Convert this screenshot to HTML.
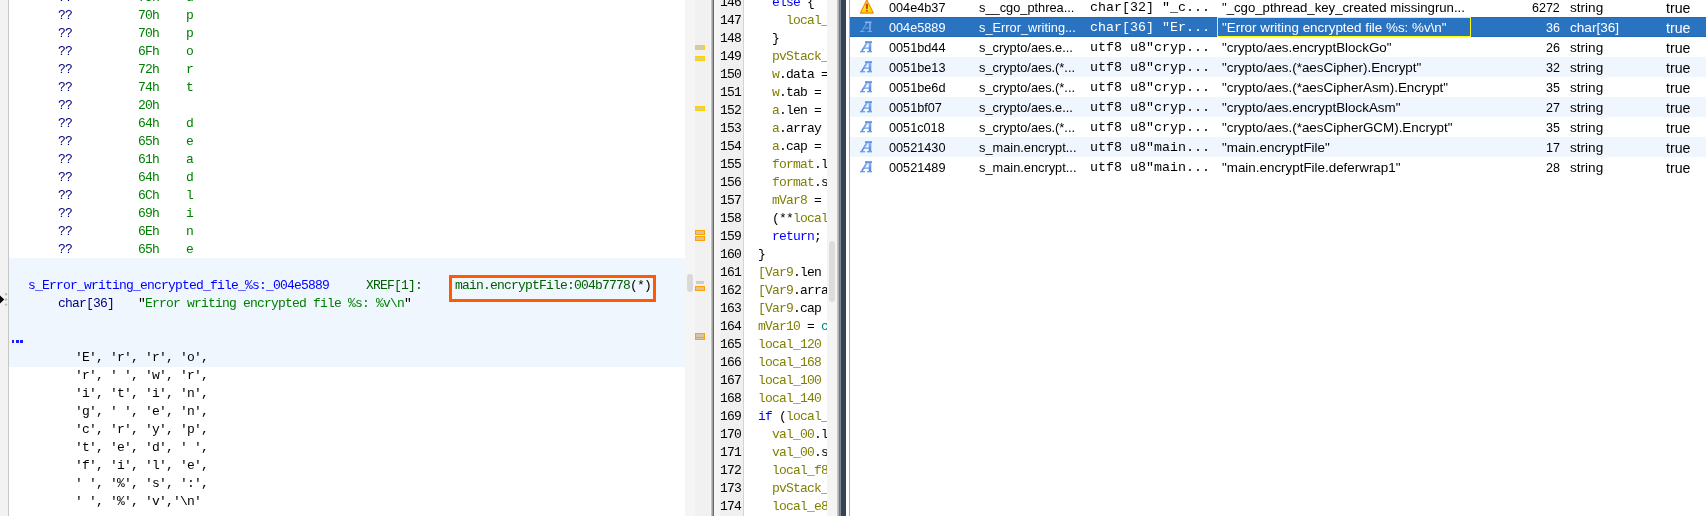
<!DOCTYPE html><html><head><meta charset='utf-8'><style>
html,body{margin:0;padding:0;width:1706px;height:516px;overflow:hidden;background:#fff}
body>div,body>svg{position:absolute}
div{position:absolute;box-sizing:content-box}
.m,.t,.tm{will-change:transform}
.m{font-family:'Liberation Mono', monospace;font-size:13.0px;letter-spacing:-0.8px;line-height:18px;white-space:pre}
.t{font-family:'Liberation Sans', sans-serif;font-size:13.5px;line-height:20px;white-space:pre}
.tm{font-family:'Liberation Mono', monospace;font-size:13.34px;letter-spacing:0px;line-height:20px;white-space:pre}
</style></head><body><div style="left:0;top:0;width:8px;height:516px;background:#f2f2f2"></div><div style="left:8px;top:0;width:1px;height:516px;background:#c6c6c6"></div><div style="left:9px;top:0;width:676px;height:516px;background:#ffffff"></div><div style="left:9px;top:258px;width:676px;height:109px;background:#eff6fe"></div><div class="m" style="left:58px;top:-11px"><span style="color:#00007f">??</span></div><div class="m" style="left:138px;top:-11px"><span style="color:#008000">75h</span></div><div class="m" style="left:186px;top:-11px"><span style="color:#008000">u</span></div><div class="m" style="left:58px;top:7px"><span style="color:#00007f">??</span></div><div class="m" style="left:138px;top:7px"><span style="color:#008000">70h</span></div><div class="m" style="left:186px;top:7px"><span style="color:#008000">p</span></div><div class="m" style="left:58px;top:25px"><span style="color:#00007f">??</span></div><div class="m" style="left:138px;top:25px"><span style="color:#008000">70h</span></div><div class="m" style="left:186px;top:25px"><span style="color:#008000">p</span></div><div class="m" style="left:58px;top:43px"><span style="color:#00007f">??</span></div><div class="m" style="left:138px;top:43px"><span style="color:#008000">6Fh</span></div><div class="m" style="left:186px;top:43px"><span style="color:#008000">o</span></div><div class="m" style="left:58px;top:61px"><span style="color:#00007f">??</span></div><div class="m" style="left:138px;top:61px"><span style="color:#008000">72h</span></div><div class="m" style="left:186px;top:61px"><span style="color:#008000">r</span></div><div class="m" style="left:58px;top:79px"><span style="color:#00007f">??</span></div><div class="m" style="left:138px;top:79px"><span style="color:#008000">74h</span></div><div class="m" style="left:186px;top:79px"><span style="color:#008000">t</span></div><div class="m" style="left:58px;top:97px"><span style="color:#00007f">??</span></div><div class="m" style="left:138px;top:97px"><span style="color:#008000">20h</span></div><div class="m" style="left:186px;top:97px"><span style="color:#008000"> </span></div><div class="m" style="left:58px;top:115px"><span style="color:#00007f">??</span></div><div class="m" style="left:138px;top:115px"><span style="color:#008000">64h</span></div><div class="m" style="left:186px;top:115px"><span style="color:#008000">d</span></div><div class="m" style="left:58px;top:133px"><span style="color:#00007f">??</span></div><div class="m" style="left:138px;top:133px"><span style="color:#008000">65h</span></div><div class="m" style="left:186px;top:133px"><span style="color:#008000">e</span></div><div class="m" style="left:58px;top:151px"><span style="color:#00007f">??</span></div><div class="m" style="left:138px;top:151px"><span style="color:#008000">61h</span></div><div class="m" style="left:186px;top:151px"><span style="color:#008000">a</span></div><div class="m" style="left:58px;top:169px"><span style="color:#00007f">??</span></div><div class="m" style="left:138px;top:169px"><span style="color:#008000">64h</span></div><div class="m" style="left:186px;top:169px"><span style="color:#008000">d</span></div><div class="m" style="left:58px;top:187px"><span style="color:#00007f">??</span></div><div class="m" style="left:138px;top:187px"><span style="color:#008000">6Ch</span></div><div class="m" style="left:186px;top:187px"><span style="color:#008000">l</span></div><div class="m" style="left:58px;top:205px"><span style="color:#00007f">??</span></div><div class="m" style="left:138px;top:205px"><span style="color:#008000">69h</span></div><div class="m" style="left:186px;top:205px"><span style="color:#008000">i</span></div><div class="m" style="left:58px;top:223px"><span style="color:#00007f">??</span></div><div class="m" style="left:138px;top:223px"><span style="color:#008000">6Eh</span></div><div class="m" style="left:186px;top:223px"><span style="color:#008000">n</span></div><div class="m" style="left:58px;top:241px"><span style="color:#00007f">??</span></div><div class="m" style="left:138px;top:241px"><span style="color:#008000">65h</span></div><div class="m" style="left:186px;top:241px"><span style="color:#008000">e</span></div><div class="m" style="left:28px;top:277px"><span style="color:#0000ff">s_Error_writing_encrypted_file_%s:_004e5889</span></div><div class="m" style="left:366px;top:277px"><span style="color:#005f00">XREF[1]:</span></div><div class="m" style="left:455px;top:277px"><span style="color:#005f00">main.encryptFile:004b7778</span><span style="color:#000000">(*)</span></div><div style="left:449px;top:275px;width:201px;height:21px;border:3px solid #ff5a00"></div><div class="m" style="left:58px;top:295px"><span style="color:#00007f">char[36]</span></div><div class="m" style="left:138px;top:295px"><span style="color:#000000">"</span><span style="color:#008000">Error writing encrypted file %s: %v\n</span><span style="color:#000000">"</span></div><div style="left:11.6px;top:340.4px;width:2.6px;height:2.8px;background:#1a1aff"></div><div style="left:16px;top:340.4px;width:2.6px;height:2.8px;background:#1a1aff"></div><div style="left:20.4px;top:340.4px;width:2.6px;height:2.8px;background:#1a1aff"></div><div class="m" style="left:75px;top:349px"><span style="color:#000000">'E', 'r', 'r', 'o',</span></div><div class="m" style="left:75px;top:367px"><span style="color:#000000">'r', ' ', 'w', 'r',</span></div><div class="m" style="left:75px;top:385px"><span style="color:#000000">'i', 't', 'i', 'n',</span></div><div class="m" style="left:75px;top:403px"><span style="color:#000000">'g', ' ', 'e', 'n',</span></div><div class="m" style="left:75px;top:421px"><span style="color:#000000">'c', 'r', 'y', 'p',</span></div><div class="m" style="left:75px;top:439px"><span style="color:#000000">'t', 'e', 'd', ' ',</span></div><div class="m" style="left:75px;top:457px"><span style="color:#000000">'f', 'i', 'l', 'e',</span></div><div class="m" style="left:75px;top:475px"><span style="color:#000000">' ', '%', 's', ':',</span></div><div class="m" style="left:75px;top:493px"><span style="color:#000000">' ', '%', 'v','\n'</span></div><svg style="position:absolute;left:0;top:293px" width="9" height="14"><path d="M0 2.5 L4.2 6.5 L0 10.5 Z" fill="#000"/><circle cx="6" cy="1.3" r="1.2" fill="#bdbdbd"/><circle cx="6" cy="6.5" r="1.2" fill="#bdbdbd"/><circle cx="6" cy="11.6" r="1.2" fill="#bdbdbd"/></svg><div style="left:685px;top:0;width:10px;height:516px;background:#f5f5f5"></div><div style="left:687px;top:274px;width:6px;height:18px;background:#d9d9d9;border-radius:3px"></div><div style="left:695px;top:0;width:16px;height:516px;background:#f1f1f1"></div><div style="left:695px;top:45px;width:8px;height:3px;border:1px solid #ffd200;background:#d6cca0"></div><div style="left:695px;top:56px;width:8px;height:3px;border:1px solid #ffd200;background:#d6cca0"></div><div style="left:695px;top:106px;width:8px;height:3px;border:1px solid #ffd200;background:#d6cca0"></div><div style="left:695px;top:230px;width:8px;height:3px;border:1px solid #ffa200;background:#d6c4a2"></div><div style="left:695px;top:236px;width:8px;height:3px;border:1px solid #ffa200;background:#d6c4a2"></div><div style="left:696px;top:281px;width:8px;height:3px;background:#cdcdcd"></div><div style="left:695px;top:286px;width:8px;height:3px;border:1px solid #ffa200;background:#d6c4a2"></div><div style="left:695px;top:333px;width:8px;height:5px;border:1px solid #ffa200;background:#d6c4a2"></div><div style="left:696px;top:337px;width:8px;height:1px;background:#ffa200"></div><div style="left:710px;top:0;width:1px;height:516px;background:#f6f6f6"></div><div style="left:711px;top:0;width:1px;height:516px;background:#c0c0c0"></div><div style="left:712px;top:0;width:1px;height:516px;background:#a0a0a0"></div><div style="left:713px;top:0;width:1px;height:516px;background:#6a6a6a"></div><div style="left:714px;top:0;width:6px;height:516px;background:#f6f6f6"></div><div style="left:720px;top:0;width:23px;height:516px;background:#f0f0f0"></div><div style="left:743px;top:0;width:1px;height:516px;background:#d4d4d4"></div><div style="left:744px;top:0;width:83px;height:516px;background:#ffffff"></div><div style="left:744px;top:0;width:83px;height:516px;overflow:hidden"><div class="m" style="left:0px;top:-6px"><span style="color:#0000ff">    else</span><span style="color:#000000"> {</span></div><div class="m" style="left:0px;top:12px"><span style="color:#7f7f00">      local_</span></div><div class="m" style="left:0px;top:30px"><span style="color:#000000">    }</span></div><div class="m" style="left:0px;top:48px"><span style="color:#7f7f00">    pvStack_</span></div><div class="m" style="left:0px;top:66px"><span style="color:#7f7f00">    w</span><span style="color:#000000">.data =</span></div><div class="m" style="left:0px;top:84px"><span style="color:#7f7f00">    w</span><span style="color:#000000">.tab =</span></div><div class="m" style="left:0px;top:102px"><span style="color:#7f7f00">    a</span><span style="color:#000000">.len =</span></div><div class="m" style="left:0px;top:120px"><span style="color:#7f7f00">    a</span><span style="color:#000000">.array</span></div><div class="m" style="left:0px;top:138px"><span style="color:#7f7f00">    a</span><span style="color:#000000">.cap =</span></div><div class="m" style="left:0px;top:156px"><span style="color:#7f7f00">    format</span><span style="color:#000000">.l</span></div><div class="m" style="left:0px;top:174px"><span style="color:#7f7f00">    format</span><span style="color:#000000">.s</span></div><div class="m" style="left:0px;top:192px"><span style="color:#7f7f00">    mVar8</span><span style="color:#000000"> =</span></div><div class="m" style="left:0px;top:210px"><span style="color:#000000">    (**</span><span style="color:#7f7f00">local</span></div><div class="m" style="left:0px;top:228px"><span style="color:#0000ff">    return</span><span style="color:#000000">;</span></div><div class="m" style="left:0px;top:246px"><span style="color:#000000">  }</span></div><div class="m" style="left:0px;top:264px"><span style="color:#7f7f00">  [Var9</span><span style="color:#000000">.len</span></div><div class="m" style="left:0px;top:282px"><span style="color:#7f7f00">  [Var9</span><span style="color:#000000">.arra</span></div><div class="m" style="left:0px;top:300px"><span style="color:#7f7f00">  [Var9</span><span style="color:#000000">.cap</span></div><div class="m" style="left:0px;top:318px"><span style="color:#7f7f00">  mVar10</span><span style="color:#000000"> = </span><span style="color:#007f7f">c</span></div><div class="m" style="left:0px;top:336px"><span style="color:#7f7f00">  local_120</span></div><div class="m" style="left:0px;top:354px"><span style="color:#7f7f00">  local_168</span></div><div class="m" style="left:0px;top:372px"><span style="color:#7f7f00">  local_100</span></div><div class="m" style="left:0px;top:390px"><span style="color:#7f7f00">  local_140</span></div><div class="m" style="left:0px;top:408px"><span style="color:#0000ff">  if</span><span style="color:#000000"> (</span><span style="color:#7f7f00">local_</span></div><div class="m" style="left:0px;top:426px"><span style="color:#7f7f00">    val_00</span><span style="color:#000000">.l</span></div><div class="m" style="left:0px;top:444px"><span style="color:#7f7f00">    val_00</span><span style="color:#000000">.s</span></div><div class="m" style="left:0px;top:462px"><span style="color:#7f7f00">    local_f8</span></div><div class="m" style="left:0px;top:480px"><span style="color:#7f7f00">    pvStack_</span></div><div class="m" style="left:0px;top:498px"><span style="color:#7f7f00">    local_e8</span></div></div><div class="m" style="left:720px;top:-6px;color:#000">146</div><div class="m" style="left:720px;top:12px;color:#000">147</div><div class="m" style="left:720px;top:30px;color:#000">148</div><div class="m" style="left:720px;top:48px;color:#000">149</div><div class="m" style="left:720px;top:66px;color:#000">150</div><div class="m" style="left:720px;top:84px;color:#000">151</div><div class="m" style="left:720px;top:102px;color:#000">152</div><div class="m" style="left:720px;top:120px;color:#000">153</div><div class="m" style="left:720px;top:138px;color:#000">154</div><div class="m" style="left:720px;top:156px;color:#000">155</div><div class="m" style="left:720px;top:174px;color:#000">156</div><div class="m" style="left:720px;top:192px;color:#000">157</div><div class="m" style="left:720px;top:210px;color:#000">158</div><div class="m" style="left:720px;top:228px;color:#000">159</div><div class="m" style="left:720px;top:246px;color:#000">160</div><div class="m" style="left:720px;top:264px;color:#000">161</div><div class="m" style="left:720px;top:282px;color:#000">162</div><div class="m" style="left:720px;top:300px;color:#000">163</div><div class="m" style="left:720px;top:318px;color:#000">164</div><div class="m" style="left:720px;top:336px;color:#000">165</div><div class="m" style="left:720px;top:354px;color:#000">166</div><div class="m" style="left:720px;top:372px;color:#000">167</div><div class="m" style="left:720px;top:390px;color:#000">168</div><div class="m" style="left:720px;top:408px;color:#000">169</div><div class="m" style="left:720px;top:426px;color:#000">170</div><div class="m" style="left:720px;top:444px;color:#000">171</div><div class="m" style="left:720px;top:462px;color:#000">172</div><div class="m" style="left:720px;top:480px;color:#000">173</div><div class="m" style="left:720px;top:498px;color:#000">174</div><div style="left:827px;top:0;width:10px;height:516px;background:#f4f4f4"></div><div style="left:829px;top:241px;width:6px;height:61px;background:#dcdcdc;border-radius:3px"></div><div style="left:837px;top:0;width:1px;height:516px;background:#c4c4c4"></div><div style="left:838px;top:0;width:1px;height:516px;background:#b0b0b0"></div><div style="left:839px;top:0;width:1px;height:516px;background:#787878"></div><div style="left:840px;top:0;width:1px;height:516px;background:#7c8894"></div><div style="left:841px;top:0;width:5px;height:516px;background:#364355"></div><div style="left:846px;top:0;width:3px;height:516px;background:#ffffff"></div><div style="left:849px;top:0;width:1px;height:516px;background:#92b4dc"></div><div style="left:850px;top:0;width:856px;height:516px;background:#ffffff"></div><svg style="position:absolute;left:859px;top:-1px" width="16" height="16" viewBox="0 0 16 16"><defs><linearGradient id="wg" x1="0" y1="0" x2="0" y2="1"><stop offset="0" stop-color="#fff2a0"/><stop offset="0.6" stop-color="#ffe600"/><stop offset="1" stop-color="#ffd000"/></linearGradient></defs><path d="M7.8 0.9 L14.3 14.1 L1.4 14.1 Z" fill="url(#wg)" stroke="#f28a10" stroke-width="1.15" stroke-linejoin="round"/><rect x="6.9" y="4.6" width="2" height="5.2" fill="#c0401a"/><rect x="6.9" y="10.8" width="2" height="1.8" fill="#d85a1a"/></svg><div class="t" style="left:889px;top:-2px;color:#000000;font-size:12.7px">004e4b37</div><div class="t" style="left:979px;top:-2px;color:#000000;font-size:12.8px">s__cgo_pthrea...</div><div class="tm" style="left:1090px;top:-2px;color:#000000">char[32] "_c...</div><div class="t" style="left:1222px;top:-2px;color:#000000;font-size:13.2px">"_cgo_pthread_key_created missingrun...</div><div class="t" style="right:146px;top:-2px;color:#000000;font-size:12.5px">6272</div><div class="t" style="left:1570px;top:-2px;color:#000000;font-size:13.6px">string</div><div class="t" style="left:1666px;top:-2px;color:#000000;font-size:14.2px">true</div><div style="left:850px;top:17px;width:856px;height:20px;background:#2a73c1"></div><div style="left:850px;top:17px;width:856px;height:1px;background:#1f6abb"></div><div style="left:850px;top:36px;width:856px;height:1px;background:#1f6abb"></div><svg style="position:absolute;left:859px;top:20px" width="14" height="14" viewBox="0 0 14 14"><g fill="#78a4ec"><rect x="6" y="1.5" width="6.5" height="1.6" fill="#8cb4f0"/><path d="M10 3 L12 3 L11.8 11 L10.2 11 Z"/><path d="M7.2 3 L8.4 3 L3.2 11 L2.2 11 Z"/><rect x="1" y="11" width="4.5" height="1"/><rect x="8.5" y="11" width="4.5" height="1"/><rect x="5.5" y="7.5" width="4.5" height="1"/></g></svg><div class="t" style="left:889px;top:18px;color:#ffffff;font-size:12.7px">004e5889</div><div class="t" style="left:979px;top:18px;color:#ffffff;font-size:12.8px">s_Error_writing...</div><div class="tm" style="left:1090px;top:18px;color:#ffffff">char[36] "Er...</div><div class="t" style="left:1222px;top:18px;color:#ffffff;font-size:13.4px">"Error writing encrypted file %s: %v\n"</div><div class="t" style="right:146px;top:18px;color:#ffffff;font-size:12.5px">36</div><div class="t" style="left:1570px;top:18px;color:#ffffff;font-size:13.6px">char[36]</div><div class="t" style="left:1666px;top:18px;color:#ffffff;font-size:14.2px">true</div><div style="left:1217px;top:17px;width:252px;height:18px;border:1px solid #ffff00"></div><svg style="position:absolute;left:859px;top:40px" width="14" height="14" viewBox="0 0 14 14"><defs><linearGradient id="ag40" x1="0" y1="0" x2="0" y2="1"><stop offset="0" stop-color="#8ab2f0"/><stop offset="1" stop-color="#4e86de"/></linearGradient></defs><g fill="url(#ag40)"><rect x="6" y="1" width="7" height="2"/><path d="M9.6 3 L12.4 3 L12.2 11 L9.8 11 Z"/><path d="M6.6 3 L9 3 L3.8 11 L2 11 Z"/><rect x="1" y="11" width="5" height="1.3"/><rect x="8" y="11" width="5" height="1.3"/><rect x="5" y="7.3" width="5" height="1.3"/></g></svg><div class="t" style="left:889px;top:38px;color:#000000;font-size:12.7px">0051bd44</div><div class="t" style="left:979px;top:38px;color:#000000;font-size:12.8px">s_crypto/aes.e...</div><div class="tm" style="left:1090px;top:38px;color:#000000">utf8 u8"cryp...</div><div class="t" style="left:1222px;top:38px;color:#000000;font-size:13.4px">"crypto/aes.encryptBlockGo"</div><div class="t" style="right:146px;top:38px;color:#000000;font-size:12.5px">26</div><div class="t" style="left:1570px;top:38px;color:#000000;font-size:13.6px">string</div><div class="t" style="left:1666px;top:38px;color:#000000;font-size:14.2px">true</div><div style="left:850px;top:57px;width:856px;height:20px;background:#eff6fe"></div><svg style="position:absolute;left:859px;top:60px" width="14" height="14" viewBox="0 0 14 14"><defs><linearGradient id="ag60" x1="0" y1="0" x2="0" y2="1"><stop offset="0" stop-color="#8ab2f0"/><stop offset="1" stop-color="#4e86de"/></linearGradient></defs><g fill="url(#ag60)"><rect x="6" y="1" width="7" height="2"/><path d="M9.6 3 L12.4 3 L12.2 11 L9.8 11 Z"/><path d="M6.6 3 L9 3 L3.8 11 L2 11 Z"/><rect x="1" y="11" width="5" height="1.3"/><rect x="8" y="11" width="5" height="1.3"/><rect x="5" y="7.3" width="5" height="1.3"/></g></svg><div class="t" style="left:889px;top:58px;color:#000000;font-size:12.7px">0051be13</div><div class="t" style="left:979px;top:58px;color:#000000;font-size:12.8px">s_crypto/aes.(*...</div><div class="tm" style="left:1090px;top:58px;color:#000000">utf8 u8"cryp...</div><div class="t" style="left:1222px;top:58px;color:#000000;font-size:13.4px">"crypto/aes.(*aesCipher).Encrypt"</div><div class="t" style="right:146px;top:58px;color:#000000;font-size:12.5px">32</div><div class="t" style="left:1570px;top:58px;color:#000000;font-size:13.6px">string</div><div class="t" style="left:1666px;top:58px;color:#000000;font-size:14.2px">true</div><svg style="position:absolute;left:859px;top:80px" width="14" height="14" viewBox="0 0 14 14"><defs><linearGradient id="ag80" x1="0" y1="0" x2="0" y2="1"><stop offset="0" stop-color="#8ab2f0"/><stop offset="1" stop-color="#4e86de"/></linearGradient></defs><g fill="url(#ag80)"><rect x="6" y="1" width="7" height="2"/><path d="M9.6 3 L12.4 3 L12.2 11 L9.8 11 Z"/><path d="M6.6 3 L9 3 L3.8 11 L2 11 Z"/><rect x="1" y="11" width="5" height="1.3"/><rect x="8" y="11" width="5" height="1.3"/><rect x="5" y="7.3" width="5" height="1.3"/></g></svg><div class="t" style="left:889px;top:78px;color:#000000;font-size:12.7px">0051be6d</div><div class="t" style="left:979px;top:78px;color:#000000;font-size:12.8px">s_crypto/aes.(*...</div><div class="tm" style="left:1090px;top:78px;color:#000000">utf8 u8"cryp...</div><div class="t" style="left:1222px;top:78px;color:#000000;font-size:13.4px">"crypto/aes.(*aesCipherAsm).Encrypt"</div><div class="t" style="right:146px;top:78px;color:#000000;font-size:12.5px">35</div><div class="t" style="left:1570px;top:78px;color:#000000;font-size:13.6px">string</div><div class="t" style="left:1666px;top:78px;color:#000000;font-size:14.2px">true</div><div style="left:850px;top:97px;width:856px;height:20px;background:#eff6fe"></div><svg style="position:absolute;left:859px;top:100px" width="14" height="14" viewBox="0 0 14 14"><defs><linearGradient id="ag100" x1="0" y1="0" x2="0" y2="1"><stop offset="0" stop-color="#8ab2f0"/><stop offset="1" stop-color="#4e86de"/></linearGradient></defs><g fill="url(#ag100)"><rect x="6" y="1" width="7" height="2"/><path d="M9.6 3 L12.4 3 L12.2 11 L9.8 11 Z"/><path d="M6.6 3 L9 3 L3.8 11 L2 11 Z"/><rect x="1" y="11" width="5" height="1.3"/><rect x="8" y="11" width="5" height="1.3"/><rect x="5" y="7.3" width="5" height="1.3"/></g></svg><div class="t" style="left:889px;top:98px;color:#000000;font-size:12.7px">0051bf07</div><div class="t" style="left:979px;top:98px;color:#000000;font-size:12.8px">s_crypto/aes.e...</div><div class="tm" style="left:1090px;top:98px;color:#000000">utf8 u8"cryp...</div><div class="t" style="left:1222px;top:98px;color:#000000;font-size:13.4px">"crypto/aes.encryptBlockAsm"</div><div class="t" style="right:146px;top:98px;color:#000000;font-size:12.5px">27</div><div class="t" style="left:1570px;top:98px;color:#000000;font-size:13.6px">string</div><div class="t" style="left:1666px;top:98px;color:#000000;font-size:14.2px">true</div><svg style="position:absolute;left:859px;top:120px" width="14" height="14" viewBox="0 0 14 14"><defs><linearGradient id="ag120" x1="0" y1="0" x2="0" y2="1"><stop offset="0" stop-color="#8ab2f0"/><stop offset="1" stop-color="#4e86de"/></linearGradient></defs><g fill="url(#ag120)"><rect x="6" y="1" width="7" height="2"/><path d="M9.6 3 L12.4 3 L12.2 11 L9.8 11 Z"/><path d="M6.6 3 L9 3 L3.8 11 L2 11 Z"/><rect x="1" y="11" width="5" height="1.3"/><rect x="8" y="11" width="5" height="1.3"/><rect x="5" y="7.3" width="5" height="1.3"/></g></svg><div class="t" style="left:889px;top:118px;color:#000000;font-size:12.7px">0051c018</div><div class="t" style="left:979px;top:118px;color:#000000;font-size:12.8px">s_crypto/aes.(*...</div><div class="tm" style="left:1090px;top:118px;color:#000000">utf8 u8"cryp...</div><div class="t" style="left:1222px;top:118px;color:#000000;font-size:13.4px">"crypto/aes.(*aesCipherGCM).Encrypt"</div><div class="t" style="right:146px;top:118px;color:#000000;font-size:12.5px">35</div><div class="t" style="left:1570px;top:118px;color:#000000;font-size:13.6px">string</div><div class="t" style="left:1666px;top:118px;color:#000000;font-size:14.2px">true</div><div style="left:850px;top:137px;width:856px;height:20px;background:#eff6fe"></div><svg style="position:absolute;left:859px;top:140px" width="14" height="14" viewBox="0 0 14 14"><defs><linearGradient id="ag140" x1="0" y1="0" x2="0" y2="1"><stop offset="0" stop-color="#8ab2f0"/><stop offset="1" stop-color="#4e86de"/></linearGradient></defs><g fill="url(#ag140)"><rect x="6" y="1" width="7" height="2"/><path d="M9.6 3 L12.4 3 L12.2 11 L9.8 11 Z"/><path d="M6.6 3 L9 3 L3.8 11 L2 11 Z"/><rect x="1" y="11" width="5" height="1.3"/><rect x="8" y="11" width="5" height="1.3"/><rect x="5" y="7.3" width="5" height="1.3"/></g></svg><div class="t" style="left:889px;top:138px;color:#000000;font-size:12.7px">00521430</div><div class="t" style="left:979px;top:138px;color:#000000;font-size:12.8px">s_main.encrypt...</div><div class="tm" style="left:1090px;top:138px;color:#000000">utf8 u8"main...</div><div class="t" style="left:1222px;top:138px;color:#000000;font-size:13.4px">"main.encryptFile"</div><div class="t" style="right:146px;top:138px;color:#000000;font-size:12.5px">17</div><div class="t" style="left:1570px;top:138px;color:#000000;font-size:13.6px">string</div><div class="t" style="left:1666px;top:138px;color:#000000;font-size:14.2px">true</div><svg style="position:absolute;left:859px;top:160px" width="14" height="14" viewBox="0 0 14 14"><defs><linearGradient id="ag160" x1="0" y1="0" x2="0" y2="1"><stop offset="0" stop-color="#8ab2f0"/><stop offset="1" stop-color="#4e86de"/></linearGradient></defs><g fill="url(#ag160)"><rect x="6" y="1" width="7" height="2"/><path d="M9.6 3 L12.4 3 L12.2 11 L9.8 11 Z"/><path d="M6.6 3 L9 3 L3.8 11 L2 11 Z"/><rect x="1" y="11" width="5" height="1.3"/><rect x="8" y="11" width="5" height="1.3"/><rect x="5" y="7.3" width="5" height="1.3"/></g></svg><div class="t" style="left:889px;top:158px;color:#000000;font-size:12.7px">00521489</div><div class="t" style="left:979px;top:158px;color:#000000;font-size:12.8px">s_main.encrypt...</div><div class="tm" style="left:1090px;top:158px;color:#000000">utf8 u8"main...</div><div class="t" style="left:1222px;top:158px;color:#000000;font-size:13.4px">"main.encryptFile.deferwrap1"</div><div class="t" style="right:146px;top:158px;color:#000000;font-size:12.5px">28</div><div class="t" style="left:1570px;top:158px;color:#000000;font-size:13.6px">string</div><div class="t" style="left:1666px;top:158px;color:#000000;font-size:14.2px">true</div></body></html>
